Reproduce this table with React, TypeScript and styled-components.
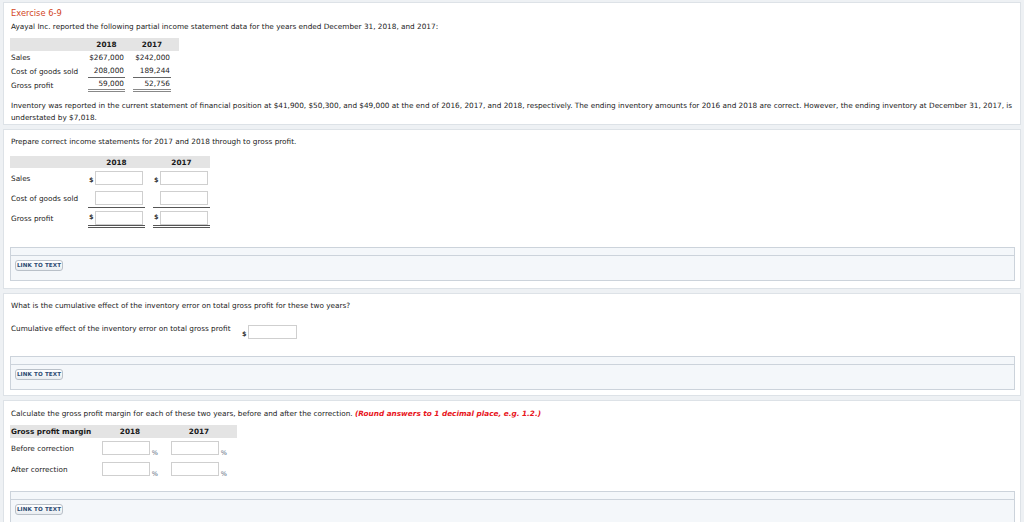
import React from "react";
import styled, { createGlobalStyle } from "styled-components";

const Global = createGlobalStyle`
  html, body { margin: 0; padding: 0; background: #eef1f4; }
  body { font-family: "DejaVu Sans", Verdana, sans-serif; font-size: 7.3px; color: #222; }
  * { box-sizing: border-box; }
`;

const Page = styled.div`
  width: 1024px;
  height: 522px;
  overflow: hidden;
  padding: 2px 3px 0 3px;
  display: flex;
  flex-direction: column;
  gap: 4px;
`;

const Panel = styled.section<{ $h: number }>`
  flex: 0 0 ${(p) => p.$h}px;
  background: #fff;
  border: 1px solid #dde2e7;
  padding: 3px 5px 0 6px;
`;

const Title = styled.div`
  color: #d2461e;
  font-size: 8.3px;
  line-height: 13px;
  margin-top: 1px;
  padding-left: 1px;
`;

const Text = styled.div<{ $mt?: number }>`
  margin-top: ${(p) => p.$mt ?? 0}px;
  line-height: 12px;
  padding-left: 1px;
  white-space: nowrap;
`;

const Red = styled.span`
  color: #e8141b;
  font-weight: bold;
  font-style: italic;
`;

const Grid = styled.div<{ $cols: string; $gap: number; $mt: number }>`
  margin-top: ${(p) => p.$mt}px;
  display: grid;
  justify-content: start;
  grid-template-columns: ${(p) => p.$cols};
  column-gap: ${(p) => p.$gap}px;
`;

const HeadBar = styled.div<{ $h: number; $extra?: number }>`
  grid-column: 1 / -1;
  display: grid;
  grid-template-columns: subgrid;
  background: #e4e4e4;
  height: ${(p) => p.$h}px;
  box-shadow: ${(p) => p.$extra ?? 0}px 0 0 #e4e4e4;
  align-items: center;
  font-weight: bold;
  color: #1a1a1a;
`;

const HeadCell = styled.div<{ $left?: boolean }>`
  text-align: ${(p) => (p.$left ? "left" : "center")};
  padding-left: ${(p) => (p.$left ? "1px" : "0")};
  white-space: nowrap;
`;

const Label = styled.div<{ $h: number }>`
  height: ${(p) => p.$h}px;
  display: flex;
  align-items: center;
  padding-left: 1px;
  white-space: nowrap;
`;

const Value = styled.div<{ $h: number; $line?: "single" | "double" }>`
  height: ${(p) => p.$h}px;
  display: flex;
  align-items: center;
  justify-content: flex-end;
  padding-right: 1px;
  border-bottom: ${(p) =>
    p.$line === "single" ? "1px solid #666" : p.$line === "double" ? "3px double #888" : "none"};
`;

const Cell = styled.div<{ $h: number; $line?: "single" | "double" }>`
  height: ${(p) => p.$h}px;
  display: flex;
  align-items: flex-start;
  padding-top: 3px;
  border-bottom: ${(p) =>
    p.$line === "single" ? "1px solid #555" : p.$line === "double" ? "3px double #555" : "none"};
`;

const Dollar = styled.span`
  width: 7px;
  padding-left: 1px;
  align-self: stretch;
  display: flex;
  align-items: flex-end;
  padding-bottom: 4px;
  font-size: 6.5px;
  font-weight: bold;
  color: #333;
`;

const Input = styled.div<{ $w: number }>`
  width: ${(p) => p.$w}px;
  height: 14px;
  border: 1px solid #cfcfcf;
  background: #fff;
`;

const Pct = styled.span`
  align-self: flex-end;
  font-size: 6.5px;
  color: #5a6a80;
  margin-left: 2px;
  margin-bottom: 2px;
`;

const InlineRow = styled.div<{ $mt: number }>`
  margin-top: ${(p) => p.$mt}px;
  display: flex;
  align-items: flex-start;
`;

const InlineLabel = styled.div`
  width: 231px;
  padding-left: 1px;
  line-height: 12px;
  margin-top: 1px;
`;

const LinkBox = styled.div<{ $mt: number }>`
  margin-top: ${(p) => p.$mt}px;
  border: 1px solid #ccd3db;
  background: #f4f7fa;
`;

const LinkStrip = styled.div`
  height: 8px;
  border-bottom: 1px solid #ccd3db;
`;

const LinkBody = styled.div`
  padding: 4px 4px 9px;
`;

const LinkButton = styled.button`
  display: block;
  width: 48px;
  height: 11px;
  padding: 0;
  border: 1px solid #b9c0c8;
  border-radius: 3px;
  background: linear-gradient(#ffffff, #e9edf1);
  font-family: "DejaVu Sans", Verdana, sans-serif;
  font-size: 5.6px;
  font-weight: bold;
  color: #2c4b72;
  line-height: 9px;
  letter-spacing: 0.1px;
`;

const LinkToText = ({ mt }: { mt: number }) => (
  <LinkBox $mt={mt}>
    <LinkStrip />
    <LinkBody>
      <LinkButton>LINK TO TEXT</LinkButton>
    </LinkBody>
  </LinkBox>
);

const Entry = ({ dollar, line }: { dollar?: boolean; line?: "single" | "double" }) => (
  <Cell $h={20} $line={line}>
    <Dollar>{dollar ? "$" : ""}</Dollar>
    <Input $w={48} />
  </Cell>
);

const PctEntry = () => (
  <Cell $h={21}>
    <Input $w={48} />
    <Pct>%</Pct>
  </Cell>
);

export default function App() {
  return (
    <>
      <Global />
      <Page>
        <Panel $h={123}>
          <Title>Exercise 6-9</Title>
          <Text $mt={1}>
            Ayayal Inc. reported the following partial income statement data for the years ended December 31, 2018, and 2017:
          </Text>
          <Grid $cols="70px 37px 38px" $gap={8} $mt={5}>
            <HeadBar $h={13} $extra={8}>
              <HeadCell />
              <HeadCell>2018</HeadCell>
              <HeadCell>2017</HeadCell>
            </HeadBar>
            <Label $h={13}>Sales</Label>
            <Value $h={13}>$267,000</Value>
            <Value $h={13}>$242,000</Value>
            <Label $h={14}>Cost of goods sold</Label>
            <Value $h={14} $line="single">208,000</Value>
            <Value $h={14} $line="single">189,244</Value>
            <Label $h={14}>Gross profit</Label>
            <Value $h={14} $line="double">59,000</Value>
            <Value $h={14} $line="double">52,756</Value>
          </Grid>
          <Text $mt={8}>
            Inventory was reported in the current statement of financial position at $41,900, $50,300, and $49,000 at the end of 2016, 2017, and 2018, respectively. The ending inventory amounts for 2016 and 2018 are correct. However, the ending inventory at December 31, 2017, is
          </Text>
          <Text>understated by $7,018.</Text>
        </Panel>

        <Panel $h={160}>
          <Text $mt={3}>Prepare correct income statements for 2017 and 2018 through to gross profit.</Text>
          <Grid $cols="70px 57px 57px" $gap={8} $mt={8}>
            <HeadBar $h={12}>
              <HeadCell />
              <HeadCell>2018</HeadCell>
              <HeadCell>2017</HeadCell>
            </HeadBar>
            <Label $h={20}>Sales</Label>
            <Entry dollar />
            <Entry dollar />
            <Label $h={20}>Cost of goods sold</Label>
            <Entry line="single" />
            <Entry line="single" />
            <Label $h={20}>Gross profit</Label>
            <Entry dollar line="double" />
            <Entry dollar line="double" />
          </Grid>
          <LinkToText mt={19} />
        </Panel>

        <Panel $h={103}>
          <Text $mt={3}>What is the cumulative effect of the inventory error on total gross profit for these two years?</Text>
          <InlineRow $mt={10}>
            <InlineLabel>Cumulative effect of the inventory error on total gross profit</InlineLabel>
            <Cell $h={20}>
              <Dollar>$</Dollar>
              <Input $w={49} />
            </Cell>
          </InlineRow>
          <LinkToText mt={14} />
        </Panel>

        <Panel $h={140}>
          <Text $mt={4}>
            Calculate the gross profit margin for each of these two years, before and after the correction. <Red>(Round answers to 1 decimal place, e.g. 1.2.)</Red>
          </Text>
          <Grid $cols="79px 56px 56px" $gap={13} $mt={5}>
            <HeadBar $h={13} $extra={10}>
              <HeadCell $left>Gross profit margin</HeadCell>
              <HeadCell>2018</HeadCell>
              <HeadCell>2017</HeadCell>
            </HeadBar>
            <Label $h={21}>Before correction</Label>
            <PctEntry />
            <PctEntry />
            <Label $h={21}>After correction</Label>
            <PctEntry />
            <PctEntry />
          </Grid>
          <LinkToText mt={11} />
        </Panel>
      </Page>
    </>
  );
}
